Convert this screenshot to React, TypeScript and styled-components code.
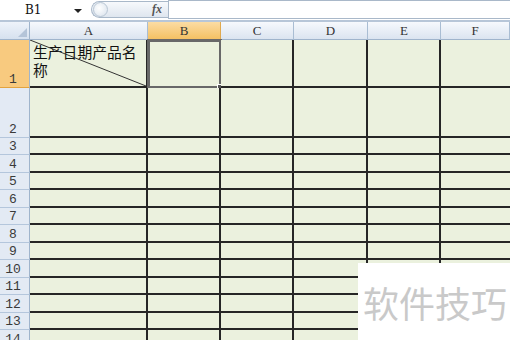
import styled, { createGlobalStyle } from 'styled-components'

const GlobalStyle = createGlobalStyle`
  html, body {
    margin: 0;
    padding: 0;
    background: #ffffff;
    overflow: hidden;
  }
`

const COLS = ['A', 'B', 'C', 'D', 'E', 'F']
const ROW_HEIGHTS = [48, 50, 17, 18, 17, 18, 17, 18, 17, 18, 17, 18, 17, 18]

const Page = styled.div`
  position: relative;
  width: 510px;
  height: 340px;
  display: flex;
  flex-direction: column;
  overflow: hidden;
  font-family: 'Liberation Serif', serif;
`

const FormulaBar = styled.div`
  height: 20px;
  flex: none;
  display: flex;
  align-items: stretch;
  background: #ffffff;
  border-bottom: 2px solid #b7c6d8;
`

const NameBox = styled.div`
  width: 88px;
  display: flex;
  align-items: center;
  justify-content: space-between;
  padding: 0 6px 0 25px;
  box-sizing: border-box;
  font-family: 'DejaVu Serif', serif;
  font-size: 12px;
  color: #111;
`

const DropArrow = styled.span`
  width: 0;
  height: 0;
  border-left: 4px solid transparent;
  border-right: 4px solid transparent;
  border-top: 4px solid #222;
  margin-top: 1px;
`

const FxPill = styled.div`
  margin: 1px 0 2px 3px;
  width: 77px;
  display: flex;
  align-items: center;
  justify-content: space-between;
  border: 1px solid #a9b8c9;
  border-right: none;
  border-radius: 9px 0 0 9px;
  background: linear-gradient(#f7f9fc, #dfe6ef);
  box-sizing: border-box;
  padding: 0 6px 0 1px;
`

const Knob = styled.span`
  width: 15px;
  height: 15px;
  border-radius: 50%;
  border: 1px solid #b9c6d4;
  background: radial-gradient(circle at 40% 40%, #ffffff, #d8e1ec);
  box-sizing: border-box;
`

const Fx = styled.span`
  font-family: 'Liberation Serif', serif;
  font-style: italic;
  font-weight: bold;
  font-size: 12px;
  color: #555;
`

const FormulaInput = styled.div`
  flex: 1;
  border: 1px solid #a9b8c9;
  border-right: none;
  margin-bottom: 1px;
  background: #ffffff;
`

const Sheet = styled.div`
  display: grid;
  grid-template-columns: 30px 118px 73px 73px 74px 73px 1fr;
  grid-template-rows: 18px ${ROW_HEIGHTS.map((h) => `${h}px`).join(' ')};
`

const Corner = styled.div`
  position: relative;
  background: linear-gradient(#eef3fa, #d6e1ef);
  border-right: 1px solid #9fb4cc;
  border-bottom: 1px solid #9fb4cc;
  box-sizing: border-box;

  &::after {
    content: '';
    position: absolute;
    right: 2px;
    bottom: 2px;
    border-left: 9px solid transparent;
    border-bottom: 9px solid #b4c4d8;
  }
`

const ColHead = styled.div<{ $active?: boolean }>`
  display: flex;
  align-items: center;
  justify-content: center;
  font-family: 'Liberation Serif', serif;
  font-size: 13px;
  color: #333;
  box-sizing: border-box;
  border-right: 1px solid ${(p) => (p.$active ? '#e0a94e' : '#a9bdd3')};
  border-bottom: 1px solid ${(p) => (p.$active ? '#e3a33f' : '#9fb4cc')};
  background: ${(p) =>
    p.$active ? 'linear-gradient(#fbdca4, #f4c163)' : 'linear-gradient(#f6f9fd, #dbe4f0)'};
`

const RowHead = styled.div<{ $active?: boolean }>`
  display: flex;
  align-items: flex-end;
  justify-content: center;
  padding-right: 3px;
  font-family: 'Liberation Mono', monospace;
  font-size: 13px;
  line-height: 15px;
  color: #3a3a3a;
  box-sizing: border-box;
  border-right: 1px solid #9fb4cc;
  border-bottom: 1px solid ${(p) => (p.$active ? '#e3a33f' : '#b4c6dc')};
  background: ${(p) => (p.$active ? '#f8ca7f' : '#e3eaf4')};
`

const Cell = styled.div<{ $open?: boolean }>`
  position: relative;
  background: #ebf1de;
  box-sizing: border-box;
  border-right: ${(p) => (p.$open ? 'none' : '2px solid #262626')};
  border-bottom: 2px solid #262626;
`

const HeaderCell = styled(Cell)`
  padding: 3px 0 0 3px;
  font-family: 'Noto Sans CJK SC', sans-serif;
  font-size: 14.8px;
  line-height: 18px;
  color: #111;
  white-space: nowrap;
`

const Diagonal = styled.svg`
  position: absolute;
  left: 0;
  top: 0;
  width: 100%;
  height: 100%;
  pointer-events: none;
`

const Selection = styled.div`
  position: absolute;
  left: -1px;
  top: -1px;
  right: -3px;
  bottom: -3px;
  border: 3px solid #686868;
  pointer-events: none;

  &::after {
    content: '';
    position: absolute;
    right: -5px;
    bottom: -5px;
    width: 5px;
    height: 5px;
    background: #555;
    border: 1px solid #fff;
  }
`

const Watermark = styled.div`
  position: absolute;
  left: 358px;
  top: 263px;
  right: 0;
  bottom: 0;
  background: #ffffff;
  display: flex;
  align-items: center;
  justify-content: center;
  padding-left: 2px;
  font-family: 'Noto Sans CJK SC', sans-serif;
  font-size: 36px;
  color: #c9c9c9;
`

export default function App() {
  return (
    <Page>
      <GlobalStyle />
      <FormulaBar>
        <NameBox>
          B1
          <DropArrow />
        </NameBox>
        <FxPill>
          <Knob />
          <Fx>fx</Fx>
        </FxPill>
        <FormulaInput />
      </FormulaBar>
      <Sheet>
        <Corner />
        {COLS.map((c) => (
          <ColHead key={c} $active={c === 'B'}>
            {c}
          </ColHead>
        ))}
        {ROW_HEIGHTS.map((_, i) => {
          const row = i + 1
          return [
            <RowHead key={`h${row}`} $active={row === 1}>
              {row}
            </RowHead>,
            ...COLS.map((c) => {
              const key = `${c}${row}`
              if (row === 1 && c === 'A') {
                return (
                  <HeaderCell key={key}>
                    <Diagonal viewBox="0 0 116 46" preserveAspectRatio="none">
                      <line x1="0" y1="0" x2="116" y2="46" stroke="#333" strokeWidth="1" />
                    </Diagonal>
                    生产日期产品名
                    <br />称
                  </HeaderCell>
                )
              }
              if (row === 1 && c === 'B') {
                return (
                  <Cell key={key}>
                    <Selection />
                  </Cell>
                )
              }
              return <Cell key={key} $open={c === 'F'} />
            }),
          ]
        })}
      </Sheet>
      <Watermark>软件技巧</Watermark>
    </Page>
  )
}
